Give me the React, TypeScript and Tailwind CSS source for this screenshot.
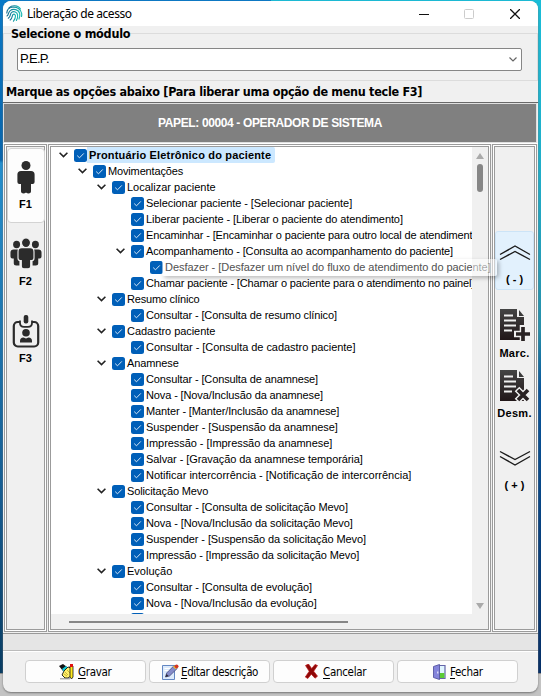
import React from 'react';

// `ls` is the letter spacing of the row's text, in pixels.
type Row = { depth: number; text: string; open?: boolean; ls: number };

const rows: Row[] = [
  { depth: 0, text: 'Prontuário Eletrônico do paciente', open: true, ls: 0.17 },
  { depth: 1, text: 'Movimentações', open: true, ls: -0.15 },
  { depth: 2, text: 'Localizar paciente', open: true, ls: 0 },
  { depth: 3, text: 'Selecionar paciente - [Selecionar paciente]', ls: -0.07 },
  { depth: 3, text: 'Liberar paciente - [Liberar o paciente do atendimento]', ls: -0.09 },
  { depth: 3, text: 'Encaminhar - [Encaminhar o paciente para outro local de atendimento]', ls: -0.14 },
  { depth: 3, text: 'Acompanhamento - [Consulta ao acompanhamento do paciente]', open: true, ls: -0.14 },
  { depth: 4, text: 'Desfazer - [Desfazer um nível do fluxo de atendimento do paciente]', ls: -0.05 },
  { depth: 3, text: 'Chamar paciente - [Chamar o paciente para o atendimento no painel]', ls: -0.15 },
  { depth: 2, text: 'Resumo clínico', open: true, ls: -0.2 },
  { depth: 3, text: 'Consultar - [Consulta de resumo clínico]', ls: -0.12 },
  { depth: 2, text: 'Cadastro paciente', open: true, ls: -0.06 },
  { depth: 3, text: 'Consultar - [Consulta de cadastro paciente]', ls: -0.05 },
  { depth: 2, text: 'Anamnese', open: true, ls: -0.12 },
  { depth: 3, text: 'Consultar - [Consulta de anamnese]', ls: -0.12 },
  { depth: 3, text: 'Nova - [Nova/Inclusão da anamnese]', ls: -0.12 },
  { depth: 3, text: 'Manter - [Manter/Inclusão da anamnese]', ls: -0.13 },
  { depth: 3, text: 'Suspender - [Suspensão da anamnese]', ls: -0.06 },
  { depth: 3, text: 'Impressão - [Impressão da anamnese]', ls: -0.06 },
  { depth: 3, text: 'Salvar - [Gravação da anamnese temporária]', ls: -0.08 },
  { depth: 3, text: 'Notificar intercorrência - [Notificação de intercorrência]', ls: 0 },
  { depth: 2, text: 'Solicitação Mevo', open: true, ls: -0.12 },
  { depth: 3, text: 'Consultar - [Consulta de solicitação Mevo]', ls: -0.1 },
  { depth: 3, text: 'Nova - [Nova/Inclusão da solicitação Mevo]', ls: -0.1 },
  { depth: 3, text: 'Suspender - [Suspensão da solicitação Mevo]', ls: -0.09 },
  { depth: 3, text: 'Impressão - [Impressão da solicitação Mevo]', ls: -0.12 },
  { depth: 2, text: 'Evolução', open: true, ls: 0 },
  { depth: 3, text: 'Consultar - [Consulta de evolução]', ls: -0.08 },
  { depth: 3, text: 'Nova - [Nova/Inclusão da evolução]', ls: -0.09 },
  { depth: 3, text: 'Manter - [Manter/Inclusão da evolução]', ls: -0.1 },
];

const indents = ['pl-[8px]', 'pl-[27px]', 'pl-[46px]', 'pl-[65px]', 'pl-[84px]'];

function TreeRow({ row }: { row: Row }) {
  return (
    <div className={`flex h-4 shrink-0 items-center whitespace-nowrap ${indents[row.depth]}`}>
      <span className="w-[15px] shrink-0">
        {row.open && (
          <svg width="9" height="6" viewBox="0 0 9 6" fill="none" stroke="#222" strokeWidth="1.6">
            <path d="M.6.8 4.5 4.6 8.4.8" />
          </svg>
        )}
      </span>
      <svg width="13" height="13" viewBox="0 0 13 13" className="shrink-0">
        <rect width="13" height="13" rx="2.5" fill="#005fb8" />
        <path d="M3.2 6.6 5.5 8.8 9.8 4.4" fill="none" stroke="#d5e6f6" strokeWidth="1" />
      </svg>
      {row.depth === 0 ? (
        <span className="h-4 rounded-r-[2px] bg-[#cce8ff] pr-[4px] pl-[2px] leading-4 font-bold" style={{ letterSpacing: row.ls }}>{row.text}</span>
      ) : (
        <span className="pl-[2px] leading-4" style={{ letterSpacing: row.ls }}>{row.text}</span>
      )}
    </div>
  );
}

function Panel({ className, children }: { className: string; children?: React.ReactNode }) {
  return (
    <div className={`flex shrink-0 border border-[#9b9b9b] bg-white p-px ${className}`}>
      <div className="flex min-w-0 flex-1 flex-col border border-[#9b9b9b] bg-[#f0f0f0]">{children}</div>
    </div>
  );
}

function Fingerprint() {
  return (
    <svg width="17" height="17" viewBox="0 0 17 17" fill="none" strokeWidth="1.15">
      <defs>
        <linearGradient id="fp" x1="0" x2="1">
          <stop offset="0" stopColor="#176b91" />
          <stop offset="1" stopColor="#18b9b2" />
        </linearGradient>
      </defs>
      <g stroke="url(#fp)" strokeLinecap="round">
        <path d="M3 3C6-.2 12 0 14.5 4" />
        <path d="M.8 8C1 5 3 2.6 6 2.2c5-.8 9 2 9.7 6.3.1 1 .1 2-.2 3" />
        <path d="M1 11C3 9.8 1.8 7.6 4.2 5.6c3-2.5 8.500-1 9.500 3 .4 2 0 4-.7 5.500" />
        <path d="M2.300 13.200C5 11.600 3.600 9 5.600 7.400c2.200-1.700 5.600-.3 6 2.400.3 2-.3 4-1.200 5.600" />
        <path d="M4.200 15C6.800 13 5.800 10.700 7.100 9.500c1.200-.8 2.400.2 2.400 1.600 0 2-.8 3.700-2 5.100" />
      </g>
    </svg>
  );
}

function Person() {
  return (
    <svg width="18" height="33" viewBox="0 0 18 33" fill="#2b2b2b">
      <circle cx="9" cy="4.500" r="4.500" />
      <path d="M4 10h10q3.600 0 3.600 3.500V21q0 2-2 2H14v7.500q0 2-2.500 2-1.500 0-2-.8h-1q-.5.8-2 .8-2.500 0-2.500-2V23H2.400q-2 0-2-2v-7.500Q.4 10 4 10z" />
    </svg>
  );
}

function Group() {
  return (
    <svg width="32" height="31" viewBox="0 0 34 31" preserveAspectRatio="none" fill="#2b2b2b">
      <circle cx="7" cy="6.500" r="3.700" />
      <circle cx="27" cy="6.500" r="3.700" />
      <path d="M4 11.500h6v16H6.500Q4 27.500 4 25.500v-5H2.500Q.5 20.500.5 18.500v-4Q.5 11.500 4 11.500zM30 11.500h-6v16h3.500q2.500 0 2.500-2v-5h1.500q2 0 2-2v-4q0-3-3.500-3z" />
      <g stroke="#f0f0f0" strokeWidth="1.200">
        <circle cx="17" cy="4.800" r="4.800" />
        <path d="M12.500 9.700h9q4 0 4 4V20q0 2.600-2.400 2.600H22v5.600q0 2.600-2.800 2.600h-4.400q-2.800 0-2.800-2.600v-5.600h-1.100Q8.500 22.600 8.500 20v-6.300q0-4 4-4z" />
      </g>
    </svg>
  );
}

function Badge() {
  return (
    <svg width="28" height="33" viewBox="0 0 28 33">
      <rect x="1.800" y="7" width="24.400" height="24.500" rx="4" fill="none" stroke="#2b2b2b" strokeWidth="2.200" />
      <path d="M8 5h12v4q0 4-4 4h-4q-4 0-4-4z" fill="#f0f0f0" />
      <path d="M8 5.500V8q0 3.800 4 3.800h4q4 0 4-3.800V5.500" fill="none" stroke="#2b2b2b" strokeWidth="1.800" />
      <rect x="11.700" y="0" width="4.600" height="8.500" rx="2" fill="#2b2b2b" />
      <circle cx="14" cy="17.800" r="3.800" fill="#2b2b2b" />
      <path d="M8 27.500V26q0-3.500 3.500-3.500l2.500 1 2.500-1Q20 22.500 20 26v1.500z" fill="#2b2b2b" />
    </svg>
  );
}

function DocIcon({ kind }: { kind: 'plus' | 'x' }) {
  return (
    <svg width="32" height="34" viewBox="0 0 32 34">
      <defs>
        <linearGradient id={`doc-${kind}`} x2="0" y2="1">
          <stop offset="0" stopColor="#444" />
          <stop offset="1" stopColor="#211719" />
        </linearGradient>
      </defs>
      <path d="M1 0h17v8h7v23H1z" fill={`url(#doc-${kind})`} />
      <path d="M20 1v6h5z" fill="#3b3b3b" />
      <path d="M5 6.500h9M5 11.500h12M5 16.500h12M5 21.500h8" stroke="#f0f0f0" strokeWidth="1.800" />
      {kind === 'plus' ? (
        <>
          <path d="M24 16v18M15 25h17" stroke="#f0f0f0" strokeWidth="6.500" />
          <path d="M24 18v14M17 25h14" stroke="#292223" strokeWidth="3.700" />
        </>
      ) : (
        <>
          <path d="m18 19 12 12M30 19 18 31" stroke="#f0f0f0" strokeWidth="6.500" />
          <path d="m19 20 10 10M29 20 19 30" stroke="#292223" strokeWidth="3.700" />
        </>
      )}
    </svg>
  );
}

function DoubleChevron({ down }: { down?: boolean }) {
  return (
    <svg width="32" height="16" viewBox="0 0 32 16" fill="none" stroke="#1c1c1c" strokeWidth="1.400" className={down ? 'rotate-180' : ''}>
      <path d="M1 9.500 16 1l15 8.500M1 14.500 16 6.500l15 8" />
    </svg>
  );
}

function SaveIcon() {
  return (
    <svg width="16" height="16" viewBox="0 0 16 16">
      <path d="M0 2 4 0l4 3-4 4z" fill="#111" />
      <path d="m3 5 4-3 2 2-4 4z" fill="#12c8d4" />
      <path d="m5 7 4-4 3 1v8l-3 2H6L3 11z" fill="#fff16a" stroke="#111" strokeWidth=".9" />
      <path d="m6 8 3 3M8 6l3 3M5 10l3 2" stroke="#b79a20" strokeWidth=".7" />
      <path d="M11 2h3v11l-1.500 2L11 13z" fill="#ffe91d" stroke="#111" strokeWidth=".8" />
      <path d="M11 0h3v3h-3z" fill="#e01010" />
      <path d="M1 14.800h10" stroke="#888" />
    </svg>
  );
}

function EditIcon() {
  return (
    <svg width="17" height="16" viewBox="0 0 17 16">
      <path d="M.5 1.500h12v14H.5z" fill="#dceafb" stroke="#6387c3" />
      <path d="M2.500 4.500h6M2.500 6.500h5" stroke="#fff" />
      <path d="m3.500 13 1.200-4 7.500-7.500 3 3L7.500 12z" fill="#858bc8" stroke="#454b81" strokeWidth=".8" />
      <path d="m3.500 13 1-3 2 2z" fill="#272733" />
      <path d="m11 2.500 2.700 2.700 1-1L12 1.500z" fill="#f5bc22" />
      <circle cx="14.600" cy="2.300" r="1.900" fill="#d33420" />
    </svg>
  );
}

function CancelIcon() {
  return (
    <svg width="13" height="15" viewBox="0 0 13 15">
      <path d="M.5 1.500 3.500 0l3.200 4.500L10 .5l2.500 1-3.800 5.700 3.800 5-2.500 2-3.700-4-3.500 4.300L.3 13l3.900-5.700z" fill="#8e0808" stroke="#bd1717" strokeWidth=".7" />
    </svg>
  );
}

function DoorIcon() {
  return (
    <svg width="13" height="16" viewBox="0 0 13 16">
      <path d="M5 1.500h7v13H5z" fill="#dff5ff" stroke="#6464a8" strokeWidth="1.200" />
      <path d="M6 9h5.400v5H6z" fill="#5acb35" />
      <path d="m.5 2.500 6-2v15l-6-2z" fill="#8585db" stroke="#5656a2" strokeWidth=".9" />
      <path d="M4.800 7.500v2" stroke="#fff" />
    </svg>
  );
}

function ActionButton({ icon, label, className }: { icon: React.ReactNode; label: string; className: string }) {
  return (
    <button className={`flex h-[23px] w-[121px] items-center rounded-[4px] border border-[#d0d0d0] bg-[#fdfdfd] font-['DejaVu_Sans_Condensed','DejaVu_Sans',sans-serif] text-[11.5px] leading-4 ${className}`}>
      {icon}
      <span className="whitespace-nowrap">
        <span className="underline underline-offset-2">{label[0]}</span>
        {label.slice(1)}
      </span>
    </button>
  );
}

export default function App() {
  return (
    <div className="relative h-[696px] w-[541px] overflow-hidden bg-[linear-gradient(90deg,#1673b9_0_270px,#148fad_270px)] pt-px pl-[3px] font-['Liberation_Sans',Arial,sans-serif] text-[11px] text-black">
      <div className="absolute inset-0 flex flex-col">
        <div className="flex flex-1">
          <div className="flex-1 bg-[linear-gradient(#0879c8,#0865ac_160px,#2490cf_163px,#145b91_500px,#063b62)]" />
          <div className="flex-1 bg-[linear-gradient(#18bdd8,#20adc8_180px,#268faa_330px,#08549a_390px,#052e66)]" />
        </div>
        <div className="h-[23px] border-t border-[#888] bg-[#c3c3c3]" />
      </div>

      <main className="relative flex h-[691px] w-[535px] flex-col overflow-hidden rounded-[8px] bg-[#f0f0f0] shadow-[0_1px_2px_#777]">
        <header className="flex h-[25px] shrink-0 items-center bg-white pl-[3px]">
          <Fingerprint />
          <span className="ml-[4px] whitespace-nowrap font-['Noto_Sans',sans-serif] text-[12px] leading-4 tracking-[-0.45px]">Liberação de acesso</span>
          <div className="mr-[18px] ml-auto flex items-center">
            <svg width="10" height="10" className="mr-[35px]"><path d="M0 5.500h10" stroke="#111" /></svg>
            <svg width="10" height="10" className="mr-[36px]"><rect x=".5" y=".5" width="9" height="9" rx="1" fill="none" stroke="#ccc" /></svg>
            <svg width="10" height="10"><path d="m0 0 10 10M10 0 0 10" stroke="#111" strokeWidth="1.300" /></svg>
          </div>
        </header>

        <fieldset className="h-[55px] shrink-0 border border-[#dcdcdc] pl-[13px]">
          <legend className="-ml-[6px] h-[15px] whitespace-nowrap font-['DejaVu_Sans_Condensed','DejaVu_Sans',sans-serif] text-[12.5px] leading-[15px] font-bold tracking-[-0.25px]">Selecione o módulo</legend>
          <div className="mt-[7px] flex h-[23px] w-[505px] items-center justify-between rounded-[2px] border border-[#868686] bg-white pr-[4px] pl-[2px] text-[13px] tracking-[-0.8px]">
            <span className="-mt-[2px] leading-4">P.E.P.</span>
            <svg width="8" height="5" fill="none" stroke="#666" strokeWidth="1.200"><path d="m.5.5 3.500 3.500L7.500.5" /></svg>
          </div>
        </fieldset>
        <h1 className="flex h-[21px] shrink-0 items-center pt-[2px] pl-[3px] whitespace-nowrap font-['DejaVu_Sans_Condensed','DejaVu_Sans',sans-serif] text-[12.5px] font-bold tracking-[-0.3px]">
          Marque as opções abaixo [Para liberar uma opção de menu tecle F3]
        </h1>

        <div className="h-[41px] shrink-0 border-t border-[#696969] pr-px">
          <div className="flex h-[40px] items-center justify-center border border-[#dfdfdf] bg-[#808080] text-[12px] font-bold tracking-[-0.37px] text-white">
            PAPEL: 00004 - OPERADOR DE SISTEMA
          </div>
        </div>

        <div className="flex h-[489px] shrink-0 border-t border-white pl-px">
          <Panel className="mr-px w-[43px]">
            <div className="mt-px flex h-[75px] w-[38px] shrink-0 flex-col items-center self-center rounded-[4px] border border-[#d3d3d3] bg-[#fdfdfd] pt-[12px]">
              <Person />
              <b className="mt-[4px] leading-[13px]">F1</b>
            </div>
            <div className="mt-[15px] flex flex-col items-center">
              <Group />
              <b className="mt-[6px] leading-[13px]">F2</b>
            </div>
            <div className="mt-[27px] flex flex-col items-center">
              <Badge />
              <b className="mt-[4px] leading-[13px]">F3</b>
            </div>
          </Panel>

          <Panel className="mr-px w-[443px]">
            <div className="flex h-[467px]">
              <div className="flex w-[421px] shrink-0 flex-col overflow-hidden bg-white">
                {rows.map((row) => (
                  <TreeRow key={row.text} row={row} />
                ))}
              </div>
              <div className="flex flex-1 flex-col items-center pt-[6px] pb-[5px]">
                <svg width="8" height="6"><path d="M0 6 4 0l4 6z" fill="#aaa" /></svg>
                <div className="mt-[5px] h-[28px] w-[6px] rounded-full bg-[#868686]" />
                <svg width="8" height="6" className="mt-auto"><path d="M0 0h8L4 6z" fill="#aaa" /></svg>
              </div>
            </div>
            <div className="flex flex-1 items-center pl-[18px]">
              <div className="h-[2px] w-[279px] bg-[#868686]" />
            </div>
          </Panel>

          <Panel className="w-[45px]">
            <div className="mt-[84px] flex h-[59px] w-[39px] shrink-0 flex-col items-center rounded-[3px] border border-[#cce4f7] bg-[#e2f1fd] pt-[13px]">
              <DoubleChevron />
              <b className="mt-[12px] leading-[13px] whitespace-pre">( - )</b>
            </div>
            <div className="mt-[19px] flex flex-col items-center">
              <DocIcon kind="plus" />
              <b className="mt-[4px] text-[11px] leading-[13px] tracking-[0.3px]">Marc.</b>
            </div>
            <div className="mt-[10px] flex flex-col items-center">
              <DocIcon kind="x" />
              <b className="mt-[3px] text-[11px] leading-[13px] tracking-[0.3px]">Desm.</b>
            </div>
            <div className="mt-[30px] flex flex-col items-center">
              <DoubleChevron down />
              <b className="mt-[13px] leading-[13px] whitespace-pre">( + )</b>
            </div>
          </Panel>
        </div>

        <div className="mt-px h-[18px] shrink-0 border-t border-b border-t-[#999] border-b-[#bbb] bg-[#e5e5e5]" />
        <footer className="flex flex-1 items-start gap-[3px] border-t border-white pt-[8px] pl-[22px]">
          <ActionButton icon={<SaveIcon />} label="Gravar" className="gap-[3px] pl-[33px] tracking-[-0.3px]" />
          <ActionButton icon={<EditIcon />} label="Editar descrição" className="gap-[2px] pl-[12px] tracking-[-0.4px]" />
          <ActionButton icon={<CancelIcon />} label="Cancelar" className="gap-[5px] pl-[31px] tracking-[-0.3px]" />
          <ActionButton icon={<DoorIcon />} label="Fechar" className="gap-[4px] pl-[35px] tracking-[-0.3px]" />
        </footer>

        <div className="absolute top-[258px] left-[159px] flex h-[17px] w-[335px] items-start rounded-[2px] bg-white/50 pl-[3px] leading-4 whitespace-nowrap text-black/35 shadow-[2px_2px_4px_#0004]">
          <span style={{ letterSpacing: rows[7].ls }}>{rows[7].text}</span>
        </div>
      </main>
    </div>
  );
}
